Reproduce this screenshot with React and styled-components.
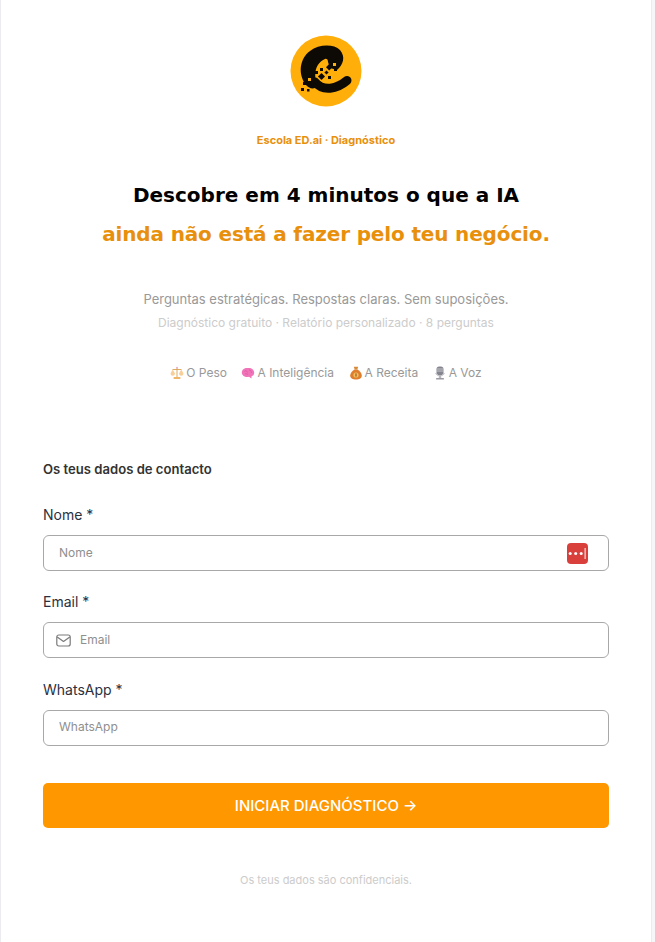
import React from 'react'
import styled, { createGlobalStyle } from 'styled-components'

const GlobalStyle = createGlobalStyle`
    html, body {
        margin: 0;
        padding: 0;
        background: #f6f6f8;
        font-family: "Inter", sans-serif;
    }
    * { box-sizing: border-box; }
`

const Logo = () => (
    <svg width="72" height="72" viewBox="0 0 72 72">
        <circle cx="36" cy="36" r="35.5" fill="#ffae0a" />
        <path d="M16 50 C8 40 9 24 20 16 C29 9 44 9 50 15 C56 22 53 30 47 35 L40 33 L38 27 C38 24 36 23 34 24.5 C29 27 26 32 25.5 37 C25 41 25 46 29 50 C24 55 20 54 16 50 Z" fill="#0d0a06" />
        <path d="M25 47 C33 57 47 54 57 45.5" fill="none" stroke="#0d0a06" strokeWidth="9" strokeLinecap="round" />
        <g fill="#0d0a06">
            <rect x="37" y="30" width="4.5" height="4.5" transform="rotate(45 39.2 32.2)" />
            <rect x="44" y="33" width="3" height="3" />
            <rect x="35" y="36" width="3" height="3" transform="rotate(45 36.5 37.5)" />
            <rect x="30" y="33" width="3" height="3" />
            <rect x="29" y="39" width="5" height="5" transform="rotate(45 31.5 41.5)" />
            <rect x="25" y="36" width="3" height="3" />
            <rect x="38" y="41" width="3" height="3" />
            <rect x="13" y="47" width="3" height="3" />
            <rect x="11" y="53" width="3" height="3" />
            <rect x="17" y="54" width="2.5" height="2.5" />
        </g>
        <g fill="#ffae0a">
            <rect x="18" y="43" width="3" height="3" />
            <rect x="14" y="51" width="3" height="3" />
            <rect x="43" y="28" width="3" height="3" />
        </g>
    </svg>
)

const Scale = () => (
    <Emoji viewBox="0 0 14 14">
        <path d="M2.5 3.5 H11.5 M7 1.5 V11" stroke="#d9a24f" strokeWidth="0.9" fill="none" />
        <circle cx="7" cy="1.8" r="1" fill="#e9b0d0" />
        <path d="M0.5 7.5 L2.7 3.5 L5 7.5 A2.2 2.2 0 0 1 0.5 7.5 Z M9 7.5 L11.3 3.5 L13.5 7.5 A2.2 2.2 0 0 1 9 7.5 Z" fill="#f8cf9a" />
        <rect x="3.5" y="11" width="7" height="2" rx="0.8" fill="#f0b566" />
    </Emoji>
)

const Brain = () => (
    <Emoji viewBox="0 0 14 14">
        <path d="M0.8 6.5 C0.8 3.2 4 1.5 7 2 C10 1.5 13.2 3.5 13.2 6.8 C13.2 8.8 12 10 10.6 10.2 L10.4 12.6 L8 10.8 C4 11.6 0.8 9.5 0.8 6.5 Z" fill="#f173b8" />
        <path d="M3.5 5.5 C4.5 4 6 5 6.5 6.5 M8 4 C9.5 4 10.5 5 10.5 7 M4 8 C5 7.5 6 8 7 8.5" stroke="#d9569d" strokeWidth="0.7" fill="none" />
    </Emoji>
)

const MoneyBag = () => (
    <Emoji viewBox="0 0 14 14">
        <path d="M4.8 0.8 L9.2 0.8 L8.3 3.5 L5.7 3.5 Z" fill="#d98b3c" />
        <path d="M5.5 3.5 H8.5 C11 5 12.8 7.5 12.8 9.5 C12.8 12.2 10.5 13.6 7 13.6 C3.5 13.6 1.2 12.2 1.2 9.5 C1.2 7.5 3 5 5.5 3.5 Z" fill="#df7f2e" />
        <circle cx="7" cy="9" r="2.6" fill="#f2bd5c" />
        <rect x="6.4" y="7.4" width="1.2" height="3.2" fill="#9c5c24" />
    </Emoji>
)

const Mic = () => (
    <Emoji viewBox="0 0 14 14">
        <rect x="3.5" y="0.5" width="7" height="8.5" rx="2.8" fill="#85858f" />
        <path d="M3.5 3 H10.5 M3.5 5 H10.5" stroke="#d4d4da" strokeWidth="0.8" />
        <path d="M2.8 7 C3 10.5 11 10.5 11.2 7" stroke="#b4b4ba" strokeWidth="1" fill="none" />
        <rect x="5.8" y="9.5" width="2.4" height="2.5" fill="#b8b8be" />
        <rect x="3" y="12" width="8" height="1.6" rx="0.7" fill="#9a9aa2" />
    </Emoji>
)

const Mail = () => (
    <svg width="15" height="13" viewBox="0 0 15 13" fill="none" stroke="#7a7a7a" strokeWidth="1.2">
        <rect x="0.8" y="1" width="13.4" height="11" rx="2" />
        <path d="M1.2 3 L7.5 7.5 L13.8 3" strokeLinejoin="round" />
    </svg>
)

const PasswordBadge = () => (
    <svg width="21" height="21" viewBox="0 0 21 21">
        <rect width="21" height="21" rx="4" fill="#d9403c" />
        <g fill="#ffffff">
            <circle cx="3.2" cy="10.5" r="1.5" />
            <circle cx="8.7" cy="10.5" r="1.5" />
            <circle cx="14.2" cy="10.5" r="1.5" />
            <rect x="17.6" y="5" width="1" height="11" />
        </g>
    </svg>
)

const pillars = [
    { icon: <Scale />, label: 'O Peso' },
    { icon: <Brain />, label: 'A Inteligência' },
    { icon: <MoneyBag />, label: 'A Receita' },
    { icon: <Mic />, label: 'A Voz' },
]

const App = () => {
    return (
        <>
            <GlobalStyle />
            <Page>
                <Card>
                    <Header>
                        <Logo />
                        <Eyebrow>Escola ED.ai · Diagnóstico</Eyebrow>
                        <Title>Descobre em 4 minutos o que a IA</Title>
                        <Subtitle>ainda não está a fazer pelo teu negócio.</Subtitle>
                        <Lead>Perguntas estratégicas. Respostas claras. Sem suposições.</Lead>
                        <Note>Diagnóstico gratuito · Relatório personalizado · 8 perguntas</Note>
                        <Pillars>
                            {pillars.map((p) => (
                                <Pillar key={p.label}>{p.icon}{p.label}</Pillar>
                            ))}
                        </Pillars>
                    </Header>
                    <Form>
                        <FormTitle>Os teus dados de contacto</FormTitle>
                        <Field>
                            <Label>Nome *</Label>
                            <InputBox>
                                <Placeholder>Nome</Placeholder>
                                <PasswordBadge />
                            </InputBox>
                        </Field>
                        <Field>
                            <Label>Email *</Label>
                            <InputBox $hasIcon>
                                <Mail />
                                <Placeholder>Email</Placeholder>
                            </InputBox>
                        </Field>
                        <Field>
                            <Label>WhatsApp *</Label>
                            <InputBox>
                                <Placeholder>WhatsApp</Placeholder>
                            </InputBox>
                        </Field>
                        <Submit>INICIAR DIAGNÓSTICO →</Submit>
                    </Form>
                    <Footer>Os teus dados são confidenciais.</Footer>
                </Card>
            </Page>
        </>
    )
}

export default App

const Page = styled.div`
    width: 655px;
    height: 942px;
    overflow: hidden;
`

const Card = styled.div`
    width: 652px;
    height: 944px;
    background: #ffffff;
    border-left: 1px solid #ececf0;
    border-right: 1px solid #ececf0;
    padding: 35px 42px 0;
`

const Header = styled.div`
    display: flex;
    flex-direction: column;
    align-items: center;
`

const Eyebrow = styled.div`
    margin-top: 26px;
    font-size: 11px;
    line-height: 14px;
    font-weight: 700;
    color: #e8900c;
`

const Title = styled.h1`
    margin: 36px 0 0;
    font-family: "DejaVu Sans", sans-serif;
    font-size: 20px;
    line-height: 24px;
    font-weight: 700;
    color: #000000;
`

const Subtitle = styled.h2`
    margin: 15px 0 0;
    font-family: "DejaVu Sans", sans-serif;
    font-size: 20px;
    line-height: 24px;
    font-weight: 700;
    letter-spacing: -0.15px;
    color: #e8900c;
`

const Lead = styled.p`
    margin: 45px 0 0;
    font-size: 13px;
    line-height: 16px;
    color: #999999;
`

const Note = styled.p`
    margin: 9px 0 0;
    font-size: 12px;
    line-height: 14px;
    color: #cccccc;
`

const Pillars = styled.div`
    display: flex;
    gap: 14.5px;
    margin-top: 35px;
`

const Pillar = styled.span`
    display: flex;
    align-items: center;
    gap: 2px;
    font-size: 12px;
    line-height: 16px;
    color: #999999;
`

const Emoji = styled.svg`
    width: 14px;
    height: 14px;
`

const Form = styled.div`
    display: flex;
    flex-direction: column;
    margin-top: 80px;
`

const FormTitle = styled.div`
    font-size: 13.1px;
    line-height: 16px;
    font-weight: 600;
    color: #333333;
    margin-bottom: 29px;
`

const Field = styled.div`
    display: flex;
    flex-direction: column;
    gap: 12px;
    margin-bottom: 22.4px;
`

const Label = styled.label`
    font-size: 14px;
    line-height: 17px;
    color: #2b3040;
`

const InputBox = styled.div`
    display: flex;
    align-items: center;
    gap: 9px;
    height: 36px;
    padding: 0 20px 0 ${(props) => (props.$hasIcon ? '12px' : '15px')};
    border: 1px solid #a8a8a8;
    border-radius: 6px;
    background: #ffffff;
`

const Placeholder = styled.span`
    flex: 1;
    padding-bottom: 2px;
    font-size: 12px;
    line-height: 15px;
    color: #8f8f8f;
`

const Submit = styled.button`
    height: 45px;
    margin-top: 14.8px;
    border: none;
    border-radius: 5px;
    background: #ff9800;
    color: #ffffff;
    font-family: "Inter", sans-serif;
    font-size: 15px;
    font-weight: 500;
`

const Footer = styled.div`
    margin-top: 46px;
    text-align: center;
    font-size: 11px;
    line-height: 13px;
    color: #cccccc;
`
